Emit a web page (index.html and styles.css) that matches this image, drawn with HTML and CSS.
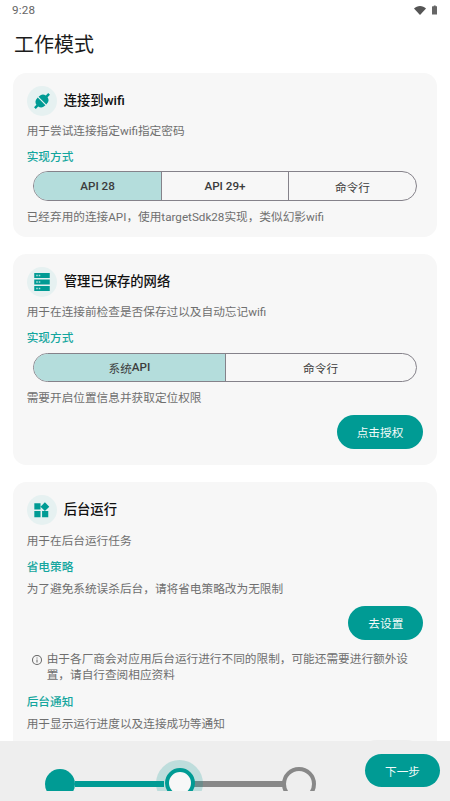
FILE: index.html
```html
<!DOCTYPE html>
<html lang="zh-CN">
<head>
<meta charset="utf-8">
<title>工作模式</title>
<link rel="stylesheet" href="styles.css">
</head>
<body>
<div class="screen">
  <div class="status">
    <span class="time">9:28</span>
    <div class="status-icons">
      <svg class="wifi" viewBox="0 0 12 9"><path d="M0 2.400C1.600.9 3.700 0 6 0s4.400.9 6 2.400L6 9z"/></svg>
      <svg class="batt" viewBox="0 0 6 10"><path d="M2 0h2v1h1.400c.3 0 .6.3.6.6V10H0V1.600c0-.3.3-.6.6-.6H2z"/></svg>
    </div>
  </div>
  <h1 class="title">工作模式</h1>

  <section class="card">
    <div class="head">
      <span class="badge">
        <svg class="ic plug" viewBox="0 0 24 24"><g transform="rotate(45 12 12)"><path d="M5.500 12.700h13v1a6.500 6.500 0 0 1-5 6.300V24h-3v-4a6.500 6.500 0 0 1-5-6.300z"/><path d="M5.500 11.300h13v-1a6.500 6.500 0 0 0-5-6.300V0h-3v4a6.500 6.500 0 0 0-5 6.300z"/></g></svg>
      </span>
      <h2>连接到wifi</h2>
    </div>
    <p class="desc d1">用于尝试连接指定wifi指定密码</p>
    <h3 class="sec s1">实现方式</h3>
    <div class="seg">
      <span class="opt on"><b>API 28</b></span><span class="opt"><b>API 29+</b></span><span class="opt">命令行</span>
    </div>
    <p class="desc d2">已经弃用的连接API，使用targetSdk28实现，类似幻影wifi</p>
  </section>

  <section class="card tall">
    <div class="head">
      <span class="badge">
        <svg class="ic" viewBox="0 0 15.500 18"><path fill-rule="evenodd" d="M0 0h15.500v5H0zM0 6.500h15.500v5H0zM0 13h15.500v5H0z"/><path class="dots" d="M2 1.800h1.500v1.400H2zM4.500 1.800H6v1.400H4.500zM2 8.300h1.500v1.400H2zM4.500 8.300H6v1.400H4.500zM2 14.800h1.500v1.400H2zM4.500 14.800H6v1.400H4.500z"/></svg>
      </span>
      <h2>管理已保存的网络</h2>
    </div>
    <p class="desc d1">用于在连接前检查是否保存过以及自动忘记wifi</p>
    <h3 class="sec s1">实现方式</h3>
    <div class="seg">
      <span class="opt on">系统<b>API</b></span><span class="opt">命令行</span>
    </div>
    <p class="desc d2">需要开启位置信息并获取定位权限</p>
    <div class="actions a2"><span class="btn">点击授权</span></div>
  </section>

  <section class="card third">
    <div class="head">
      <span class="badge">
        <svg class="ic widgets" viewBox="0 0 24 24"><path d="M13 13v8h8v-8h-8zM3 21h8v-8H3v8zM3 3v8h8V3H3zm13.660-1.310L11 7.340 16.660 13l5.660-5.660-5.660-5.650z"/></svg>
      </span>
      <h2>后台运行</h2>
    </div>
    <p class="desc d1">用于在后台运行任务</p>
    <h3 class="sec s3">省电策略</h3>
    <p class="desc d3">为了避免系统误杀后台，请将省电策略改为无限制</p>
    <div class="actions a3"><span class="btn">去设置</span></div>
    <div class="info">
      <svg class="info-ic" viewBox="0 0 24 24"><path d="M11 7h2v2h-2zm0 4h2v6h-2zm1-9a10 10 0 1 0 0 20 10 10 0 0 0 0-20zm0 18a8 8 0 1 1 0-16 8 8 0 0 1 0 16z"/></svg>
      <p>由于各厂商会对应用后台运行进行不同的限制，可能还需要进行额外设置，请自行查阅相应资料</p>
    </div>
    <h3 class="sec s4">后台通知</h3>
    <p class="desc d3">用于显示运行进度以及连接成功等通知</p>
    <div class="actions a4"><span class="btn ghost">授权</span></div>
  </section>

  <div class="bottom">
    <div class="stepper">
      <span class="dot"></span>
      <span class="line done"></span>
      <span class="halo"><span class="ring"></span></span>
      <span class="line todo"></span>
      <span class="ring off"></span>
    </div>
    <span class="btn next">下一步</span>
  </div>
</div>
</body>
</html>
```
FILE: styles.css
```css
* { box-sizing: border-box; }
html, body { margin: 0; padding: 0; background: #fff; }
body { font-family: Roboto, "Noto Sans CJK SC", sans-serif; }
h1, h2, h3, p { margin: 0; font-weight: 400; }

.screen { position: relative; width: 450px; height: 801px; overflow: hidden; background: #fff; }

.status { height: 20px; display: flex; justify-content: space-between; align-items: center; padding: 0 13px 0 12px; }
.time { font-size: 11.670px; color: #666; letter-spacing: .2px; }
.status-icons { display: flex; align-items: center; gap: 6px; }
.wifi { width: 12px; height: 9px; fill: #555; }
.batt { width: 5.500px; height: 10px; fill: #666; }

.title { font-size: 20px; line-height: 28px; color: #1c1c1c; margin: 11px 0 14px 14px; }

.card { margin: 0 13.330px 17.440px; padding: 13px 13.330px 12px; background: #f7f7f7; border-radius: 13.330px; }
.card.tall { padding-bottom: 16px; margin-bottom: 17px; }
.card.third { padding-top: 13.700px; }
.head { display: flex; align-items: center; gap: 7px; height: 30px; }
.badge { width: 30px; height: 30px; border-radius: 50%; background: #e6f1f1; display: flex; align-items: center; justify-content: center; flex: none; }
.ic { width: 18px; height: 18px; fill: #009b94; }
.ic .dots { fill: #b4dddc; }
.widgets { width: 18.600px; height: 18.600px; }
.plug { width: 20px; height: 20px; }
h2 { font-size: 13.330px; line-height: 20px; font-weight: 500; color: #111; }

.desc { font-size: 11.670px; line-height: 16px; color: #6f6f6f; }
.d1 { margin-top: 7px; }
.third .d1 { margin-top: 8px; }
.d2 { margin-top: 8px; }
.d3 { margin-top: 6.500px; }
.sec { font-size: 11.670px; line-height: 16px; font-weight: 500; color: #14a69e; }
.s1 { margin-top: 10px; }
.s3 { margin-top: 9.500px; }
.s4 { margin-top: 10px; }

.seg { display: flex; height: 29.600px; margin: 6.330px 6.670px 0; border: 1px solid #85828a; border-radius: 15px; overflow: hidden; }
.opt { flex: 1 1 0; display: flex; align-items: center; justify-content: center; font-size: 11.670px; font-weight: 400; color: #3c3c3c; border-left: 1px solid #85828a; }
.opt b { font-weight: 500; }
.opt:first-child { border-left: 0; }
.opt.on { background: #b4dddc; }

.actions { display: flex; justify-content: flex-end; }
.a2 { margin-top: 9px; }
.a3 { margin-top: 9px; }
.a4 { margin-top: 8px; }
.btn { display: flex; align-items: center; justify-content: center; height: 33.330px; border-radius: 17px; background: #009b94; color: #f4fbfa; font-size: 11.670px; padding: 0 20px; }
.ghost { background: #eee; color: #aaa; }

.info { display: flex; gap: 4px; margin: 11px 0 0 4px; }
.info-ic { width: 12px; height: 12px; fill: #666; flex: none; margin-top: 3px; }
.info p { font-size: 11.670px; line-height: 16.500px; color: #6f6f6f; }

.bottom { position: absolute; left: 0; right: 0; top: 740.700px; bottom: 0; background: #eee; display: flex; justify-content: space-between; align-items: flex-start; padding: 13.300px 10px 0 45px; }
.stepper { display: flex; align-items: flex-start; height: 31px; width: 271px; margin-top: 6px; overflow: hidden; flex: none; }
.dot { width: 30px; height: 30px; margin-top: 9px; border-radius: 50%; background: #009b94; flex: none; }
.line { height: 6.500px; margin-top: 21px; flex: none; }
.done { background: #009b94; width: 89px; }
.todo { background: #888; width: 91px; }
.halo { width: 47px; height: 47px; margin: 0 -9px 0 -8px; border-radius: 50%; background: rgba(0,155,148,.2); display: flex; align-items: center; justify-content: center; flex: none; position: relative; z-index: 1; }
.ring { width: 30px; height: 30px; border-radius: 50%; border: 4px solid #009b94; background: #f7f7f7; flex: none; display: block; }
.ring.off { width: 34px; height: 34px; margin: 7px 0 0 -3.500px; border: 4.500px solid #888; background: #eee; position: relative; }
.next { width: 75px; padding: 0; }
```
